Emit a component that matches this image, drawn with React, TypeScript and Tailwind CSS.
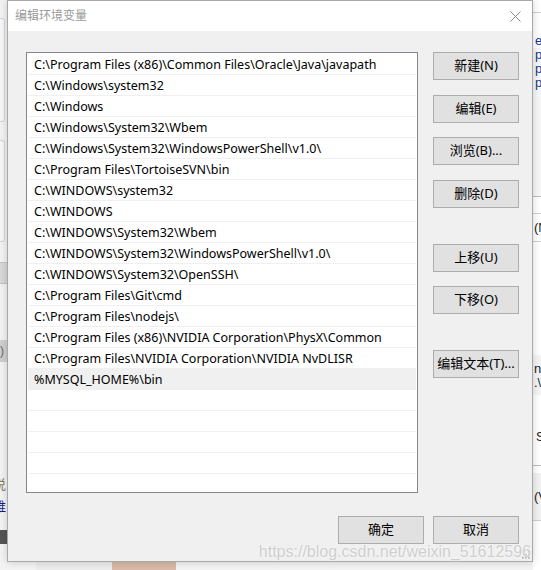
import React from "react";

const paths = [
  "C:\\Program Files (x86)\\Common Files\\Oracle\\Java\\javapath",
  "C:\\Windows\\system32",
  "C:\\Windows",
  "C:\\Windows\\System32\\Wbem",
  "C:\\Windows\\System32\\WindowsPowerShell\\v1.0\\",
  "C:\\Program Files\\TortoiseSVN\\bin",
  "C:\\WINDOWS\\system32",
  "C:\\WINDOWS",
  "C:\\WINDOWS\\System32\\Wbem",
  "C:\\WINDOWS\\System32\\WindowsPowerShell\\v1.0\\",
  "C:\\WINDOWS\\System32\\OpenSSH\\",
  "C:\\Program Files\\Git\\cmd",
  "C:\\Program Files\\nodejs\\",
  "C:\\Program Files (x86)\\NVIDIA Corporation\\PhysX\\Common",
  "C:\\Program Files\\NVIDIA Corporation\\NVIDIA NvDLISR",
  "%MYSQL_HOME%\\bin",
];

const rows = [...paths, "", "", "", "", "", ""];

const sideButtons = [
  { label: "新建(N)", mt: "mt-0" },
  { label: "编辑(E)", mt: "mt-[15px]" },
  { label: "浏览(B)...", mt: "mt-[14px]" },
  { label: "删除(D)", mt: "mt-[15px]" },
  { label: "上移(U)", mt: "mt-[36px]" },
  { label: "下移(O)", mt: "mt-[14px]" },
  { label: "编辑文本(T)...", mt: "mt-[36px]" },
];

const font = "font-['Noto_Sans','Noto_Sans_CJK_SC',sans-serif]";
const latin = "font-['Liberation_Sans',sans-serif]";

function WinButton({ label, className = "" }: { label: string; className?: string }) {
  return (
    <button
      className={`w-[86px] h-[28px] bg-[#e1e1e1] border border-[#adadad] text-[13px] text-black flex items-center justify-center ${font} ${className}`}
    >
      {label}
    </button>
  );
}

// bits of the windows behind the dialog, left side
function LeftStrip() {
  return (
    <div className="w-[7px] shrink-0 flex flex-col overflow-hidden bg-[#f3f3f3]">
      <div className="h-[18px]" />
      <div className="h-[104px] w-[5px] border-r border-y border-[#d4d4d4] rounded-r-[3px] bg-[#f7f7f7]" />
      <div className="h-[18px]" />
      <div className="h-[102px] w-[5px] border-r border-y border-[#d4d4d4] rounded-r-[3px] bg-[#f7f7f7]" />
      <div className="h-[20px]" />
      <div className="h-[22px] bg-[#d8d8d8] border-y border-[#c4c4c4]" />
      <div className="h-[56px]" />
      <div className={`h-[22px] bg-[#cfcfcf] text-[12px] leading-[22px] text-[#666] ${latin}`}>)</div>
      <div className="h-[104px]" />
      <div className="h-[28px] flex flex-col justify-end -ml-[7px] text-[13px] leading-[20px] text-[#8a7a5a] font-['Noto_Sans_CJK_SC',sans-serif]">说</div>
      <div className="h-[24px] -ml-[7px] text-[13px] leading-[24px] text-[#1a1a8a] font-['Noto_Sans_CJK_SC',sans-serif]">维</div>
      <div className="h-[12px]" />
      <div className="h-[14px] bg-[#555]" />
    </div>
  );
}

// bits of the windows behind the dialog, right side
function RightStrip() {
  return (
    <div className={`w-[8px] shrink-0 flex flex-col overflow-hidden bg-white text-[13px] text-[#222] ${latin}`}>
      <div className="h-[12px]" />
      <div className="h-px bg-[#d0d0d0]" />
      <div className="h-[35px]" />
      <div className="h-[148px] bg-[#f7f7f7] flex flex-col pl-[2px] text-[#0b3d91] leading-[14px]">
        <span className="mt-[-14px]">el</span>
        <span>pl</span>
        <span>pl</span>
        <span>pl</span>
      </div>
      <div className="h-px bg-[#bdbdbd]" />
      <div className="h-[16px]" />
      <div className="h-px bg-[#d0d0d0]" />
      <div className="h-[27px] pl-px leading-[27px]">(N</div>
      <div className="h-px bg-[#d0d0d0]" />
      <div className="h-[113px]" />
      <div className="h-[40px] bg-[#f5f5f5] flex flex-col pl-px pt-[7px] leading-[14px]">
        <span>nr</span>
        <span>.\</span>
      </div>
      <div className="h-[35px]" />
      <div className="h-[13px] pl-[3px] leading-[13px]">S</div>
      <div className="h-[22px]" />
      <div className="h-px bg-[#bdbdbd]" />
      <div className="h-[7px]" />
      <div className="h-[47px] bg-[#f2f2f2] pl-px leading-[47px]">(V</div>
      <div className="h-px bg-[#d0d0d0]" />
    </div>
  );
}

export default function App() {
  return (
    <div className="relative w-[541px] h-[570px] overflow-hidden bg-[#f3f3f3] flex">
      <LeftStrip />

      <div className="w-[526px] shrink-0 flex flex-col">
        {/* dialog window */}
        <div className="relative z-10 h-[562px] flex flex-col bg-[#f0f0f0] border border-[#a8a8a8] shadow-[0_0_8px_rgba(0,0,0,0.18)]">
          <div className="h-[30px] shrink-0 bg-white flex items-center justify-between pl-[7px] pr-[9px]">
            <span className={`text-[12px] text-[#9a9a9a] ${font}`}>编辑环境变量</span>
            <svg width="11" height="11" viewBox="0 0 11 11" className="mr-[2px]">
              <path d="M0.5 0.5 L10.5 10.5 M10.5 0.5 L0.5 10.5" stroke="#8a8a8a" strokeWidth="1" fill="none" />
            </svg>
          </div>

          <div className="flex flex-1 pl-[18px] pt-[21px] pr-[13px] gap-[15px]">
            <div className="w-[392px] h-[441px] border border-[#828790] bg-white p-px overflow-hidden">
              {rows.map((p, i) => (
                <div
                  key={i}
                  className={`h-[21px] shrink-0 border-b border-[#f0f0f0] pl-[6px] pt-[2px] flex items-center text-[12.5px] text-black whitespace-nowrap ${font} ${
                    i === 15 ? "bg-[#f0f0f0]" : ""
                  }`}
                >
                  {p}
                </div>
              ))}
            </div>

            <div className="flex flex-col">
              {sideButtons.map((b) => (
                <WinButton key={b.label} label={b.label} className={b.mt} />
              ))}
            </div>
          </div>

          <div className="flex justify-end gap-[9px] pr-[13px] pb-[17px]">
            <WinButton label="确定" />
            <WinButton label="取消" />
          </div>

          {/* size grip */}
          <svg width="9" height="9" viewBox="0 0 9 9" className="absolute right-[2px] bottom-[2px]">
            {[
              [7, 1],
              [7, 4],
              [4, 4],
              [7, 7],
              [4, 7],
              [1, 7],
            ].map(([x, y]) => (
              <rect key={`${x}-${y}`} x={x} y={y} width="1.5" height="1.5" fill="#a0a0a0" />
            ))}
          </svg>
        </div>

        {/* desktop below the dialog */}
        <div className="h-[8px] flex">
          <div className="w-[29px]" />
          <div className="w-[76px] bg-[#ececec]" />
          <div className="w-[64px] bg-[#d9b9a8]" />
        </div>
      </div>

      <RightStrip />

      {/* watermark laid over the screenshot */}
      <div className={`absolute right-[10px] bottom-[6px] z-20 text-[16px] text-[#cfcfcf] ${latin} [text-shadow:0_0_2px_#ffffff] whitespace-nowrap`}>
        https://blog.csdn.net/weixin_51612596
      </div>
    </div>
  );
}
